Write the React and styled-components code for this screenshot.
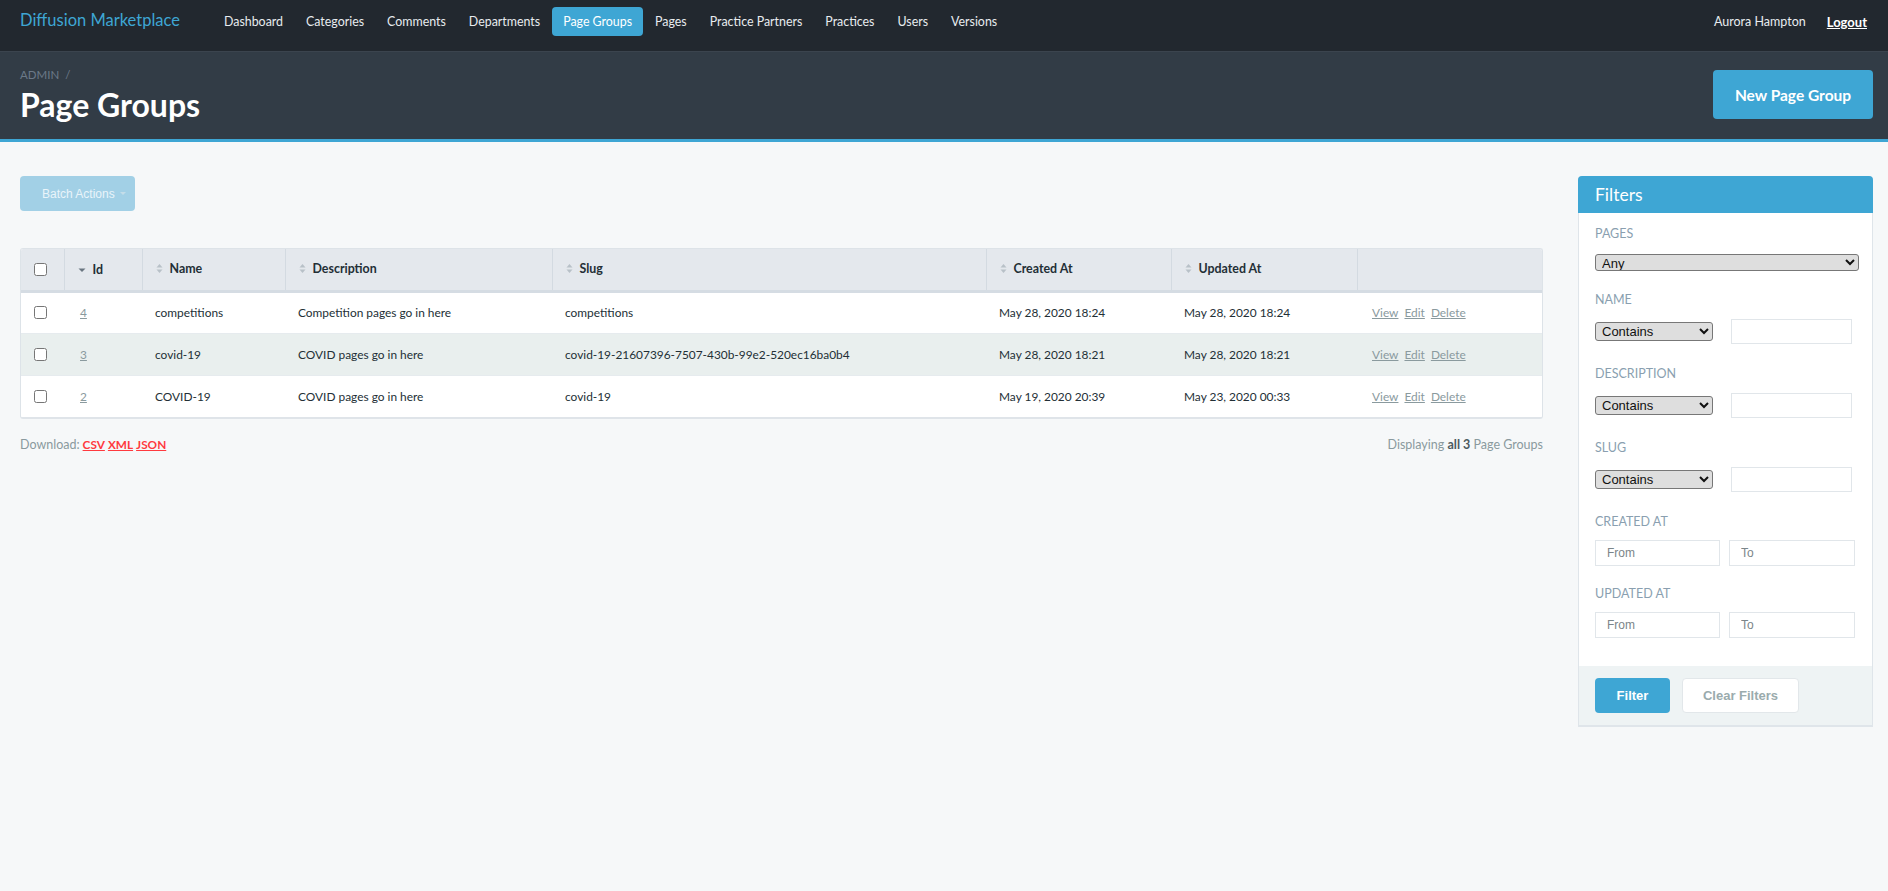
import styled, { createGlobalStyle } from 'styled-components';

const GlobalStyle = createGlobalStyle`
  html, body {
    margin: 0;
    padding: 0;
    background: #f6f8f9;
  }
  body {
    font-family: 'Lato', 'Liberation Sans', sans-serif;
    color: #232f36;
  }
  * {
    box-sizing: border-box;
  }
`;

const SANS = `'Lato', 'Liberation Sans', sans-serif`;
const ARIAL = `'Liberation Sans', Arial, sans-serif`;

const TopNav = styled.nav`
  height: 52px;
  background: #22282f;
  border-bottom: 1px solid #3b444e;
  display: flex;
  align-items: flex-start;
  padding: 0 21px 0 20px;
`;

const Brand = styled.a`
  font-family: ${SANS};
  font-size: 16.5px;
  color: #3ea6d4;
  text-decoration: none;
  margin-top: 9px;
  margin-right: 33px;
  line-height: 22px;
`;

const NavList = styled.div`
  display: flex;
  gap: 1px;
  margin-top: 7px;
`;

const NavItem = styled.a`
  font-family: ${SANS};
  font-size: 12.4px;
  text-decoration: none;
  padding: 0 11px;
  height: 29px;
  line-height: 30px;
  border-radius: 4px;
  background: ${(p) => (p.$active ? '#3ea6d4' : 'transparent')};
  color: ${(p) => (p.$active ? '#ffffff' : '#e8ecef')};
`;

const UserArea = styled.div`
  margin-left: auto;
  display: flex;
  gap: 21px;
  margin-top: 7px;
  line-height: 30px;
  font-family: ${SANS};
  font-size: 12.5px;
  color: #e8ecef;
`;

const Logout = styled.a`
  color: #ffffff;
  font-weight: 700;
  font-size: 13px;
  text-decoration: underline;
`;

const TitleBar = styled.header`
  background: #323c46;
  border-bottom: 3px solid #3ea6d4;
  height: 90px;
  display: flex;
  justify-content: space-between;
  align-items: flex-start;
  padding: 0 15px 0 20px;
`;

const TitleBlock = styled.div`
  padding-top: 14px;
`;

const Breadcrumb = styled.div`
  font-family: ${SANS};
  font-size: 11.5px;
  color: #6b7988;
  text-transform: uppercase;
  line-height: 18px;

  span {
    margin-left: 6px;
  }
`;

const PageTitle = styled.h1`
  margin: 1px 0 0;
  font-family: ${SANS};
  font-weight: 700;
  font-size: 32px;
  line-height: 40px;
  color: #ffffff;
`;

const PrimaryAction = styled.a`
  margin-top: 18px;
  width: 160px;
  height: 49px;
  border-radius: 4px;
  background: #3ea6d4;
  color: #ffffff;
  font-family: ${SANS};
  font-weight: 700;
  font-size: 15.5px;
  display: flex;
  align-items: center;
  justify-content: center;
  text-decoration: none;
`;

const Body = styled.main`
  display: flex;
  align-items: flex-start;
  gap: 35px;
  padding: 34px 15px 40px 20px;
`;

const MainCol = styled.section`
  flex: 1;
  min-width: 0;
`;

const BatchButton = styled.button`
  width: 115px;
  height: 35px;
  border: none;
  border-radius: 4px;
  background: #a2d0e6;
  color: #e9f4fa;
  font-family: ${ARIAL};
  font-size: 12px;
  display: flex;
  align-items: center;
  justify-content: flex-start;
  gap: 5px;
  padding: 0 0 0 22px;
`;

const Caret = styled.span`
  width: 0;
  height: 0;
  border-left: 3px solid transparent;
  border-right: 3px solid transparent;
  border-top: 3px solid #c4dde9;
`;

const TableWrap = styled.div`
  margin-top: 37px;
  border: 1px solid #dde3e8;
  border-bottom: 2px solid #dfe4e9;
  border-radius: 3px;
  overflow: hidden;
  background: #ffffff;
`;

const Table = styled.table`
  width: 100%;
  border-collapse: collapse;
  table-layout: fixed;
`;

const Th = styled.th`
  height: 42px;
  background: #e4e8ed;
  border-bottom: 3px solid #d5dce3;
  border-left: 1px solid #d3dae1;
  text-align: left;
  padding: 0 0 0 13px;
  font-family: ${SANS};
  font-weight: 700;
  font-size: 12.4px;
  color: #232f36;

  &:first-child {
    border-left: none;
  }
`;

const HeadLabel = styled.span`
  display: inline-flex;
  align-items: center;
  gap: 7px;
`;

const Tr = styled.tr`
  background: ${(p) => (p.$odd ? '#e9efee' : '#ffffff')};
`;

const Td = styled.td`
  height: 42px;
  padding: 0 0 0 ${(p) => p.$pad || 13}px;
  border-top: ${(p) => (p.$first ? 'none' : '1px solid #e6ebee')};
  font-family: ${SANS};
  font-size: 11.9px;
  color: #232f36;
  white-space: nowrap;
`;

const Check = styled.input`
  margin: 0;
  width: 13px;
  height: 13px;
  display: block;
`;

const IdLink = styled.a`
  color: #8a9a9e;
  text-decoration: underline;
`;

const Actions = styled.div`
  display: flex;
  gap: 6px;
`;

const ActionLink = styled.a`
  color: #8a9a9e;
  text-decoration: underline;
`;

const FootRow = styled.div`
  display: flex;
  justify-content: space-between;
  margin-top: 18px;
  font-family: ${SANS};
  font-size: 12.5px;
  color: #8a9a9e;
`;

const Formats = styled.span`
  a {
    color: #ff3a3f;
    font-weight: 700;
    font-size: 11.8px;
    text-decoration: underline;
    margin-left: 3px;
  }
`;

const Strong = styled.b`
  color: #4c5a60;
`;

const Sidebar = styled.aside`
  width: 295px;
  flex-shrink: 0;
  background: #ffffff;
  border: 1px solid #dfe5ea;
  border-bottom-width: 2px;
  border-radius: 4px 4px 0 0;
`;

const PanelHead = styled.h3`
  margin: -1px -1px 0;
  height: 37px;
  background: #3ea6d4;
  border-radius: 4px 4px 0 0;
  color: #ffffff;
  font-family: ${SANS};
  font-weight: 400;
  font-size: 17.5px;
  line-height: 37px;
  padding-left: 17px;
`;

const PanelBody = styled.div`
  padding: 11px 13px 8px 16px;
`;

const Field = styled.div`
  margin-bottom: ${(p) => p.$gap || 20}px;
`;

const Label = styled.label`
  display: block;
  font-family: ${SANS};
  font-size: 12.5px;
  line-height: 20px;
  color: #8a9fb0;
  text-transform: uppercase;
  margin-bottom: ${(p) => p.$gap || 9}px;
`;

const Select = styled.select`
  display: block;
  width: ${(p) => p.$w}px;
  height: ${(p) => p.$h}px;
  background-color: #dedede;
  border: 1px solid #777777;
  border-radius: 3px;
  font-family: ${ARIAL};
  font-size: 13px;
  color: #111111;
  padding: 0 2px;
`;

const InlineRow = styled.div`
  display: flex;
  align-items: center;
  gap: ${(p) => p.$gap}px;
`;

const TextInput = styled.input`
  width: ${(p) => p.$w}px;
  height: ${(p) => p.$h || 25}px;
  border: 1px solid #e1e6ea;
  background: #ffffff;
  font-family: ${ARIAL};
  font-size: 12px;
  padding: 0 11px;
  outline: none;

  &::placeholder {
    color: #7b8589;
  }
`;

const PanelFoot = styled.div`
  background: #eef3f4;
  padding: 12px 16px 12px;
  display: flex;
  gap: 12px;
`;

const FilterBtn = styled.button`
  height: 35px;
  padding: 0;
  width: ${(p) => p.$w}px;
  border-radius: 4px;
  font-family: ${ARIAL};
  font-weight: 700;
  font-size: 13px;
  border: ${(p) => (p.$primary ? 'none' : '1px solid #e2e7ea')};
  background: ${(p) => (p.$primary ? '#3ea6d4' : '#ffffff')};
  color: ${(p) => (p.$primary ? '#ffffff' : '#9aabad')};
`;

const SortIcon = ({ active }) =>
  active ? (
    <svg width="8" height="8" viewBox="0 0 8 8">
      <path d="M0.5 2.5 L7.5 2.5 L4 6 Z" fill="#6a7681" />
    </svg>
  ) : (
    <svg width="7" height="11" viewBox="0 0 7 11">
      <path d="M0.5 4.5 L6.5 4.5 L3.5 1 Z" fill="#b8c1c8" />
      <path d="M0.5 6.5 L6.5 6.5 L3.5 10 Z" fill="#b8c1c8" />
    </svg>
  );

const navLinks = [
  'Dashboard',
  'Categories',
  'Comments',
  'Departments',
  'Page Groups',
  'Pages',
  'Practice Partners',
  'Practices',
  'Users',
  'Versions',
];

const columns = [
  { key: 'check', width: 43 },
  { key: 'id', label: 'Id', width: 78, active: true },
  { key: 'name', label: 'Name', width: 143 },
  { key: 'description', label: 'Description', width: 267 },
  { key: 'slug', label: 'Slug', width: 434 },
  { key: 'created', label: 'Created At', width: 185 },
  { key: 'updated', label: 'Updated At', width: 186 },
  { key: 'actions', width: 187 },
];

const rows = [
  {
    id: 4,
    name: 'competitions',
    description: 'Competition pages go in here',
    slug: 'competitions',
    created: 'May 28, 2020 18:24',
    updated: 'May 28, 2020 18:24',
  },
  {
    id: 3,
    name: 'covid-19',
    description: 'COVID pages go in here',
    slug: 'covid-19-21607396-7507-430b-99e2-520ec16ba0b4',
    created: 'May 28, 2020 18:21',
    updated: 'May 28, 2020 18:21',
  },
  {
    id: 2,
    name: 'COVID-19',
    description: 'COVID pages go in here',
    slug: 'covid-19',
    created: 'May 19, 2020 20:39',
    updated: 'May 23, 2020 00:33',
  },
];

const StringFilter = ({ label }) => (
  <Field>
    <Label>{label}</Label>
    <InlineRow $gap={18}>
      <Select $w={118} $h={19} defaultValue="contains">
        <option value="contains">Contains</option>
        <option value="equals">Equals</option>
        <option value="starts_with">Starts with</option>
        <option value="ends_with">Ends with</option>
      </Select>
      <TextInput $w={121} />
    </InlineRow>
  </Field>
);

const DateFilter = ({ label, last }) => (
  <Field $gap={last ? 20 : 18}>
    <Label $gap={8}>{label}</Label>
    <InlineRow $gap={9}>
      <TextInput $w={125} $h={26} placeholder="From" />
      <TextInput $w={126} $h={26} placeholder="To" />
    </InlineRow>
  </Field>
);

const App = () => {
  return (
    <>
      <GlobalStyle />
      <TopNav>
        <Brand href="#">Diffusion Marketplace</Brand>
        <NavList>
          {navLinks.map((l) => (
            <NavItem key={l} href="#" $active={l === 'Page Groups'}>
              {l}
            </NavItem>
          ))}
        </NavList>
        <UserArea>
          <span>Aurora Hampton</span>
          <Logout href="#">Logout</Logout>
        </UserArea>
      </TopNav>

      <TitleBar>
        <TitleBlock>
          <Breadcrumb>
            Admin<span>/</span>
          </Breadcrumb>
          <PageTitle>Page Groups</PageTitle>
        </TitleBlock>
        <PrimaryAction href="#">New Page Group</PrimaryAction>
      </TitleBar>

      <Body>
        <MainCol>
          <BatchButton disabled>
            Batch Actions <Caret />
          </BatchButton>

          <TableWrap>
            <Table>
              <colgroup>
                {columns.map((c) => (
                  <col key={c.key} style={{ width: c.width }} />
                ))}
              </colgroup>
              <thead>
                <tr>
                  {columns.map((c) => (
                    <Th key={c.key}>
                      {c.key === 'check' ? (
                        <Check type="checkbox" />
                      ) : c.label ? (
                        <HeadLabel>
                          <SortIcon active={c.active} />
                          {c.label}
                        </HeadLabel>
                      ) : null}
                    </Th>
                  ))}
                </tr>
              </thead>
              <tbody>
                {rows.map((r, i) => (
                  <Tr key={r.id} $odd={i % 2 === 1}>
                    <Td $first={i === 0}>
                      <Check type="checkbox" />
                    </Td>
                    <Td $first={i === 0} $pad={16}>
                      <IdLink href="#">{r.id}</IdLink>
                    </Td>
                    <Td $first={i === 0}>{r.name}</Td>
                    <Td $first={i === 0}>{r.description}</Td>
                    <Td $first={i === 0}>{r.slug}</Td>
                    <Td $first={i === 0}>{r.created}</Td>
                    <Td $first={i === 0}>{r.updated}</Td>
                    <Td $first={i === 0} $pad={15}>
                      <Actions>
                        <ActionLink href="#">View</ActionLink>
                        <ActionLink href="#">Edit</ActionLink>
                        <ActionLink href="#">Delete</ActionLink>
                      </Actions>
                    </Td>
                  </Tr>
                ))}
              </tbody>
            </Table>
          </TableWrap>

          <FootRow>
            <span>
              Download:
              <Formats>
                <a href="#">CSV</a>
                <a href="#">XML</a>
                <a href="#">JSON</a>
              </Formats>
            </span>
            <span>
              Displaying <Strong>all 3</Strong> Page Groups
            </span>
          </FootRow>
        </MainCol>

        <Sidebar>
          <PanelHead>Filters</PanelHead>
          <PanelBody>
            <Field $gap={19}>
              <Label $gap={10}>Pages</Label>
              <Select $w={264} $h={17} defaultValue="any">
                <option value="any">Any</option>
                <option value="yes">Yes</option>
                <option value="no">No</option>
              </Select>
            </Field>
            <StringFilter label="Name" />
            <StringFilter label="Description" />
            <StringFilter label="Slug" />
            <DateFilter label="Created At" />
            <DateFilter label="Updated At" last />
          </PanelBody>
          <PanelFoot>
            <FilterBtn $primary $w={75}>
              Filter
            </FilterBtn>
            <FilterBtn $w={117}>Clear Filters</FilterBtn>
          </PanelFoot>
        </Sidebar>
      </Body>
    </>
  );
};

export default App;
